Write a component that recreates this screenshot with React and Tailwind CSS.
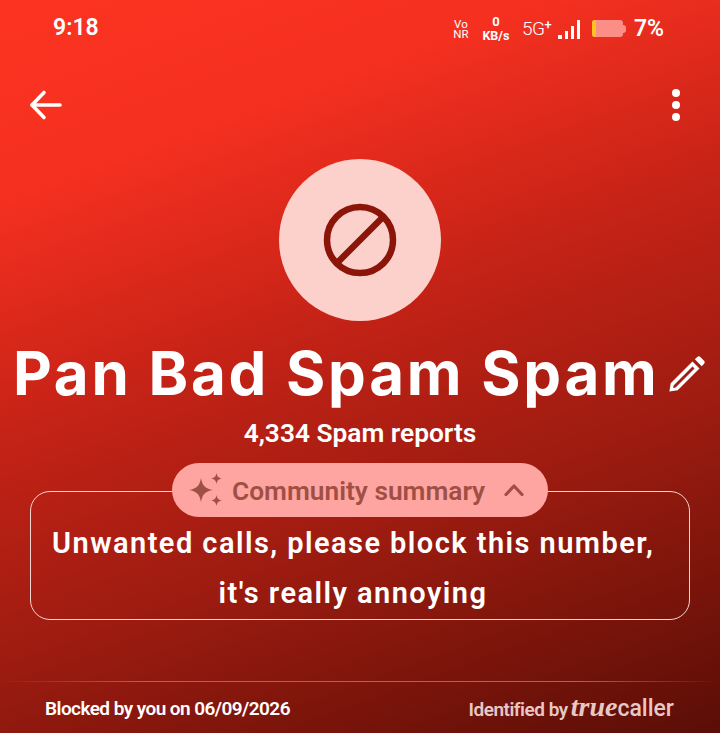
const roboto = { fontFamily: 'Roboto, "Liberation Sans", sans-serif' }

function BackArrow() {
  return (
    <svg width="34" height="34" viewBox="0 0 34 34" fill="none" stroke="white" strokeWidth="3.600" strokeLinecap="round" strokeLinejoin="round">
      <path d="M3 17h28" />
      <path d="M15 4.500 3 17l12 12.500" />
    </svg>
  )
}

function Pencil() {
  return (
    <svg width="36" height="36" viewBox="0 0 36 36" fill="white">
      <path fillRule="evenodd" d="M23.500 5.500 1.700 27.300 0.400 35.600l8.300-1.300L30.500 12.500ZM23.500 10.500l2 2L6.600 31.400l-2.500.5.500-2.500Z" />
      <path d="M25.800 3.300 28.300.9c.9-.8 2.200-.8 3 0l3.800 3.800c.8.800.8 2.100 0 3l-2.400 2.500Z" />
    </svg>
  )
}

function Sparkles() {
  return (
    <svg width="36" height="36" viewBox="0 0 36 36" fill="#a04f45">
      <path d="M13 6c1.300 7.300 3.900 10.700 12 12-8.100 1.300-10.700 4.700-12 12-1.300-7.300-3.900-10.700-12-12C9.100 16.700 11.700 13.300 13 6Z" />
      <path d="M28.500 1c.7 3.600 1.900 4.800 5.500 5.500-3.600.7-4.800 1.900-5.500 5.500-.7-3.600-1.900-4.800-5.500-5.500C26.600 5.800 27.800 4.600 28.500 1Z" />
      <path d="M28.500 23c.7 3.600 1.900 4.800 5.500 5.500-3.600.7-4.800 1.900-5.500 5.500-.7-3.600-1.900-4.800-5.500-5.500 3.600-.7 4.800-1.900 5.500-5.500Z" />
    </svg>
  )
}

function StatusIcons() {
  return (
    <div className="flex items-center text-white" style={roboto}>
      <div className="flex w-[16px] flex-col items-center text-[11.500px] leading-[10px]">
        <span>Vo</span>
        <span>NR</span>
      </div>
      <div className="ml-[13px] flex w-[28px] flex-col items-center text-[12.500px] leading-[14px] font-bold">
        <span className="text-[13px]">0</span>
        <span>KB/s</span>
      </div>
      <span className="ml-[12px] w-[29px] text-[19px] leading-none font-light tracking-[-0.5px]">5G<sup className="text-[13px] font-medium">+</sup></span>
      <div className="ml-[7px] flex h-[20px] items-end gap-[3px]">
        <div className="h-[4px] w-[4px] bg-white" />
        <div className="h-[8px] w-[3px] bg-white" />
        <div className="h-[13px] w-[3px] bg-white" />
        <div className="h-[19px] w-[3px] bg-white" />
      </div>
      <div className="ml-[12px] flex items-center">
        <div className="flex h-[17px] w-[31px] overflow-hidden rounded-[3px] bg-[#fb8e86]">
          <div className="w-[4px] bg-[#ffc21f]" />
        </div>
        <div className="h-[8px] w-[3px] rounded-r-sm bg-[#fb8e86]" />
      </div>
      <span className="ml-[8px] text-[23px] leading-none font-semibold">7%</span>
    </div>
  )
}

export default function App() {
  return (
    <div
      className="flex h-[733px] w-[720px] flex-col overflow-hidden bg-[linear-gradient(160deg,#fc3321_0%,#f53020_20%,#c32216_45%,#9b1b10_68%,#5a0e06_100%)] text-white"
      style={roboto}
    >
      <div className="flex h-[57px] items-center justify-between pr-[56px] pl-[53px]">
        <span className="text-[23px] font-semibold">9:18</span>
        <StatusIcons />
      </div>

      <div className="mt-[31px] flex h-[34px] items-center justify-between pr-[40px] pl-[29px]">
        <BackArrow />
        <div className="flex flex-col gap-[4px]">
          <div className="h-[8px] w-[8px] rounded-full bg-white" />
          <div className="h-[8px] w-[8px] rounded-full bg-white" />
          <div className="h-[8px] w-[8px] rounded-full bg-white" />
        </div>
      </div>

      <div className="mt-[37px] flex h-[162px] w-[162px] items-center justify-center self-center rounded-full bg-[#fcd0cb]">
        <svg className="blur-[0.7px]" width="74" height="74" viewBox="0 0 74 74" fill="none" stroke="#8c1509" strokeWidth="6.500">
          <circle cx="37" cy="37" r="33" />
          <path d="M13.500 60.500 60.500 13.500" />
        </svg>
      </div>

      <div className="mt-[14px] flex h-[76px] items-center pl-[13px]">
        <span className="w-[642px] text-[60px] leading-none font-bold tracking-[2.750px] whitespace-nowrap" style={{ fontFamily: 'Inter, sans-serif' }}>Pan Bad Spam Spam</span>
        <span className="mt-[2px] ml-[14px]"><Pencil /></span>
      </div>

      <div className="mt-[7px] text-center text-[26.300px] leading-[30px] font-semibold">4,334 Spam reports</div>

      <div className="relative z-10 mt-[15px] -mb-[26px] flex h-[54px] w-[376px] items-center self-center rounded-[27px] bg-[#ffa5a1] pl-[16px] text-[#a04f45]">
        <Sparkles />
        <span className="mt-[2px] ml-[8px] text-[26.300px] leading-none font-semibold">Community summary</span>
        <svg className="ml-[19px]" width="20" height="12" viewBox="0 0 20 12" fill="none" stroke="#a04f45" strokeWidth="3.200" strokeLinecap="round" strokeLinejoin="round">
          <path d="M2 10.500 10 2l8 8.500" />
        </svg>
      </div>

      <div className="mx-[30px] flex h-[129px] flex-col rounded-[20px] border border-[#f4d6d2] pt-[26px] text-[29px] font-semibold tracking-[1.450px]">
        <div className="h-[50px] pl-[21px] leading-[50px] whitespace-nowrap">Unwanted calls, please block this number,</div>
        <div className="h-[50px] pr-[14px] text-center leading-[50px]">it's really annoying</div>
      </div>

      <div className="mt-[61px] h-px bg-[linear-gradient(90deg,transparent,#b5615a_20%,#b5615a_80%,transparent)]" />

      <div className="flex flex-1 items-center justify-between pt-[3px] pr-[46px] pl-[45px]">
        <span className="text-[19px] font-semibold tracking-[-0.560px]">Blocked by you on 06/09/2026</span>
        <div className="flex items-baseline text-[#e8c8c5]">
          <span className="text-[19px] font-semibold tracking-[-0.5px]">Identified by</span>
          <span className="ml-[3px] text-[28px] leading-none font-bold italic" style={{ fontFamily: '"Liberation Serif", serif' }}>true</span>
          <span className="text-[23px] leading-none font-medium">caller</span>
        </div>
      </div>
    </div>
  )
}
